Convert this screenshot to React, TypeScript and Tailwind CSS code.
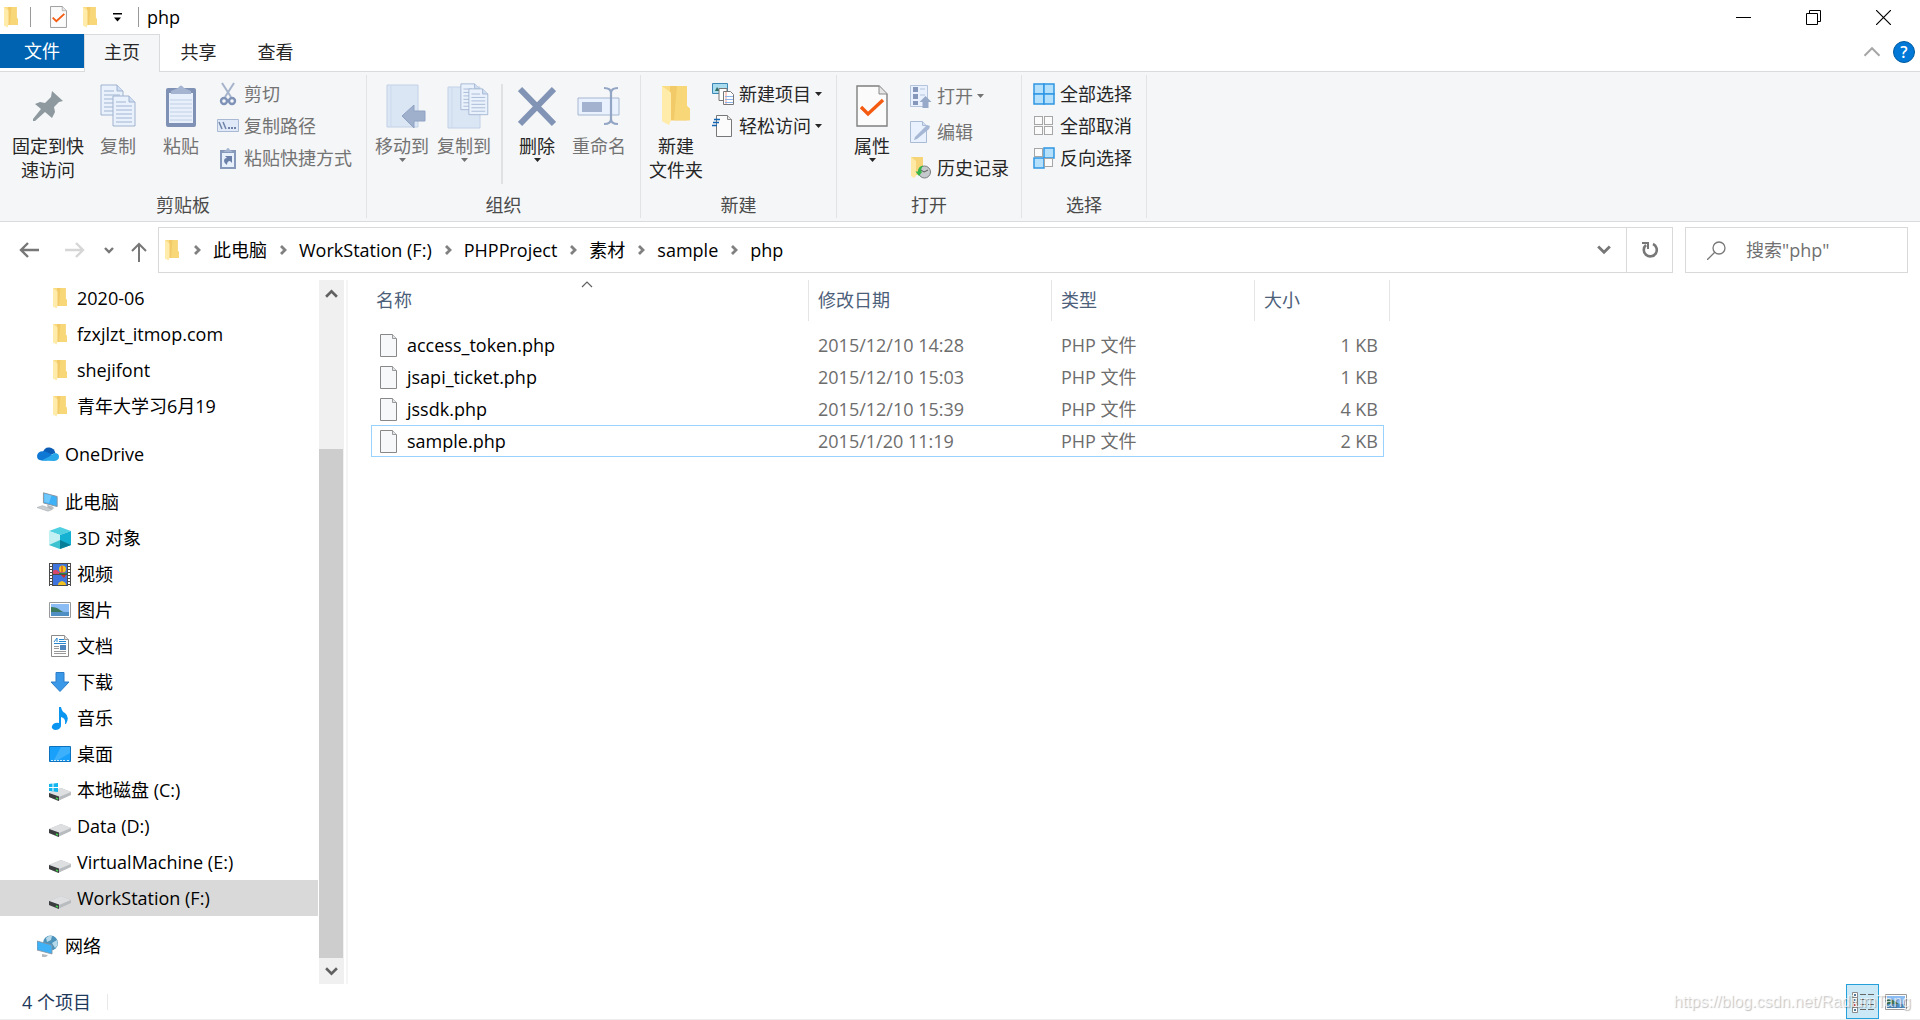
import { useState } from "react";
import type { ReactNode } from "react";

const Folder = ({ className = "h-[21px] w-[14px]" }: { className?: string }) => (
  <svg className={className} viewBox="0 0 28 42" preserveAspectRatio="none">
    <path d="M0 0h25v21l3 3v12H0z" fill="#fbdc82" />
    <path d="M8 0h17v36H8z" fill="#f2cb68" />
    <path d="M15 0h10v21l3 3v12H12z" fill="#f8d779" />
    <path d="M0 0l9 7v29l-2 5L0 37z" fill="#ffebaa" />
  </svg>
);

const CheckDoc = ({ className = "h-[22px] w-[17px]" }: { className?: string }) => (
  <svg className={className} viewBox="0 0 32 42" preserveAspectRatio="none">
    <path d="M1 1h22l8 8v32H1z" fill="#fbfbfb" stroke="#7f7f7f" strokeWidth="1.4" />
    <path d="M23 1v8h8" fill="#e6e6e6" stroke="#8a8a8a" />
    <path d="M5 22l7 7 15-14" fill="none" stroke="#f45b10" strokeWidth="3.4" />
  </svg>
);

const Pin = () => (
  <svg width="32" height="32" viewBox="0 0 32 32">
    <path d="M20 1l11 10-4 1-5 5 1 5-3 6-7-6L3 31l-2 0 0-2 8-10-6-5 5-2 5 1 6-6z" fill="#8d999f" />
  </svg>
);

const Sheet = ({ x, y }: { x: number; y: number }) => (
  <g transform={`translate(${x} ${y})`}>
    <path d="M1 1h16l6 6v24H1z" fill="#e9f1fc" stroke="#9fb2cf" />
    <path d="M17 1v6h6" fill="#cfddf1" stroke="#9fb2cf" />
    <path d="M4 7h10M4 11h16M4 15h16M4 19h16M4 23h16M4 27h16" stroke="#a3b5d1" />
  </g>
);

const Copy = () => (
  <svg width="38" height="44" viewBox="0 0 38 44">
    <Sheet x={1} y={0} />
    <Sheet x={13} y={11} />
  </svg>
);

const Paste = () => (
  <svg width="32" height="44" viewBox="0 0 32 44">
    <rect x="1" y="4" width="30" height="39" rx="2" fill="#7f91b5" />
    <path d="M4 9h24v30H4z" fill="#e8f0fb" />
    <path d="M5 16h22M5 20h22M5 24h22M5 28h22M5 32h22M5 36h22" stroke="#c0cee5" />
    <path d="M6 10V7l7-3q3-5 6 0l7 3v3z" fill="#a5b4d0" />
  </svg>
);

const Scissors = () => (
  <svg width="18" height="24" viewBox="0 0 18 24" fill="none">
    <path d="M3 1l9 14M15 1L6 15" stroke="#a5b3cb" strokeWidth="2" />
    <circle cx="5" cy="19" r="3" stroke="#7f93b8" strokeWidth="2.4" />
    <circle cx="13" cy="19" r="3" stroke="#7f93b8" strokeWidth="2.4" />
  </svg>
);

const CopyPath = () => (
  <svg width="22" height="14" viewBox="0 0 22 14">
    <path d="M.5.5h21v12H.5z" fill="#dfe9f7" stroke="#a9b9d4" />
    <path d="M2 3l3 7M6 3l3 7" stroke="#6f83a8" strokeWidth="1.5" />
    <path d="M11 9h2M14 9h2M17 9h2" stroke="#6f83a8" strokeWidth="2" />
  </svg>
);

const PasteLink = () => (
  <svg width="18" height="23" viewBox="0 0 18 23">
    <path d="M1 3h16v19H1z" fill="#8799bb" />
    <path d="M3 6h12v14H3z" fill="#e8f0fb" />
    <path d="M4 5l3-2q2-4 4 0l3 2z" fill="#a5b4d0" />
    <path d="M6 9h7v7l-2-2q-3 0-3 4-3-2-3-4 0-3 3-3z" fill="#6b80a8" />
  </svg>
);

const MoveTo = () => (
  <svg width="48" height="44" viewBox="-8 0 48 44">
    <path d="M1 1h31v42H1z" fill="#dbe6f5" stroke="#c2d1e6" />
    <path d="M5 1v42" stroke="#cbd9ec" />
    <path d="M16 32l12-11v6h11v10H28v7z" fill="#9fb0cd" stroke="#8fa2c2" />
  </svg>
);

const CopyTo = () => (
  <svg width="50" height="46" viewBox="-8 0 50 46">
    <path d="M1 4h32v41H1z" fill="#dbe6f5" stroke="#c2d1e6" />
    <path d="M5 4v41" stroke="#cbd9ec" />
    <g transform="translate(13 0) scale(.86)"><Sheet x={0} y={0} /></g>
    <g transform="translate(21 5) scale(.86)"><Sheet x={0} y={0} /></g>
  </svg>
);

const Delete = () => (
  <svg width="38" height="44" viewBox="0 0 38 44">
    <path d="M2 5l34 35M36 5L2 40" stroke="#8294b5" strokeWidth="6" />
  </svg>
);

const Rename = () => (
  <svg width="44" height="44" viewBox="0 0 44 44" fill="none">
    <path d="M1 14h41v17H1z" fill="#e8f1fd" stroke="#a6b7d2" />
    <path d="M5 18h20v10H5z" fill="#a3b3cf" />
    <path d="M27 4q7 0 7 5v26q0 5-7 5M41 4q-7 0-7 5v26q0 5 7 5" stroke="#93a5c4" strokeWidth="2.2" />
  </svg>
);

const NewItem = () => (
  <svg width="22" height="22" viewBox="0 0 22 22">
    <path d="M.5.5h15v10H.5z" fill="#a9dcee" stroke="#3d87b5" />
    <path d="M3 8l2-4 3 4z" fill="#2f6f6a" />
    <path d="M7 5.500h8v12H7z" fill="#fff" stroke="#777" />
    <path d="M11.500 8.500h7l3 3v10h-10z" fill="#fff" stroke="#777" />
    <path d="M14 9v12" stroke="#f09a8c" />
    <path d="M13 13.500h8M13 16.500h8M13 19.500h8" stroke="#8cb4ea" />
  </svg>
);

const EasyAccess = () => (
  <svg width="22" height="22" viewBox="0 0 22 22">
    <path d="M4.500.5h11l4 4v17h-15z" fill="#fbfbfb" stroke="#777" />
    <path d="M15.500.5v4h4" fill="#e6e6e6" stroke="#888" />
    <path d="M2 4.500h6M1 7.500h6M0 10.500h5" stroke="#1565b5" strokeWidth="1.500" />
  </svg>
);

const OpenIcon = () => (
  <svg width="22" height="23" viewBox="0 0 22 23">
    <path d="M.5.5h17v21H.5z" fill="#e8f1fd" stroke="#b4c4dc" />
    <path d="M3 2h5v5H3zM3 9h5v5H3zM3 16h5v4H3z" fill="#8598bb" />
    <path d="M10 4h5M10 10h5" stroke="#b4c4dc" />
    <path d="M15.500 11l6 6h-3v6h-6v-6h-3z" fill="#97a9c8" />
  </svg>
);

const Edit = () => (
  <svg width="22" height="23" viewBox="0 0 22 23">
    <path d="M.5.5h12l4 4v17H.5z" fill="#e8f1fd" stroke="#a9bad5" />
    <path d="M12.500.5v4h4" fill="#d3dff1" stroke="#a9bad5" />
    <path d="M4 19l1-3L17 4l3 1-1 3L7 18z" fill="#a5b7d4" />
  </svg>
);

const History = () => (
  <svg width="22" height="22" viewBox="0 0 22 22">
    <path d="M1 0h12v18H1z" fill="#f6d477" />
    <path d="M1 0l5 4v15l-2 2-3-2z" fill="#ffe9a4" />
    <circle cx="14.500" cy="15" r="6" fill="#c6c9cb" stroke="#777b7e" />
    <path d="M11 13l3 2 4-2" fill="none" stroke="#555" />
    <path d="M13 8.500q-5 1-5 6H5.500L9 19l3.500-4.500H11q0-3 2-6z" fill="#35b44a" />
  </svg>
);

const Cell = ({ x, y, on }: { x: number; y: number; on: boolean }) => (
  <rect
    x={on ? x : x + 0.5}
    y={on ? y : y + 0.5}
    width={on ? 10 : 8}
    height={on ? 10 : 8}
    fill={on ? "#b5e0fc" : "#fbfbfb"}
    stroke={on ? "#2f96e3" : "#a6a6a6"}
    strokeWidth={on ? 1.5 : 1}
  />
);

const Grid = ({ on }: { on: boolean[] }) => (
  <svg width="22" height="22" viewBox="0 0 22 22">
    <Cell x={1} y={1} on={on[0]} />
    <Cell x={11} y={1} on={on[1]} />
    <Cell x={1} y={11} on={on[2]} />
    <Cell x={11} y={11} on={on[3]} />
  </svg>
);

const OneDrive = () => (
  <svg width="24" height="16" viewBox="0 0 24 16">
    <path d="M6 7q2-7 8-6 5 1 6 6l-8 3z" fill="#0a5cb5" />
    <path d="M5 15q-5 0-5-5 1-5 6-5l3 0 8 4-6 6z" fill="#0f78d4" />
    <path d="M5 15l8-4 6-4q5 0 5 4 0 4-5 4.500z" fill="#28a8ea" />
  </svg>
);

const Computer = () => (
  <svg width="24" height="22" viewBox="0 0 24 22">
    <path d="M7 1l15 4v11L7 12z" fill="#3eb1f7" stroke="#8a9299" />
    <path d="M8 2l8 2-3 8-5-1z" fill="#6fc8fb" />
    <path d="M11 14l6 2 2 2-7 1z" fill="#b6bbbf" />
    <path d="M0 17l6-2 11 4-5 2z" fill="#c9ced2" stroke="#a2a7ab" strokeWidth=".6" />
  </svg>
);

const Cube = () => (
  <svg width="22" height="22" viewBox="0 0 22 22">
    <path d="M0 4l11-4 11 4-11 4z" fill="#4fd0e0" />
    <path d="M0 4l11 4v14L0 18z" fill="#c3f0f2" />
    <path d="M22 4L11 8v14l11-4z" fill="#14b1d3" />
    <path d="M0 18l11-5v9z" fill="#3dc3cf" />
    <path d="M22 18l-11-5v9z" fill="#087f98" />
  </svg>
);

const Video = () => (
  <svg width="22" height="23" viewBox="0 0 22 23">
    <path d="M0 0h22v23H0z" fill="#4a4a4a" />
    <path d="M4 1h14v10H4zM4 12h14v10H4z" fill="#3f74dc" />
    <path d="M2 1v22M20 1v22" stroke="#fff" strokeWidth="2" strokeDasharray="2 1" />
    <circle cx="13.500" cy="6" r="3.500" fill="#f2c320" />
    <path d="M4 8q3-3 6 1l8 1v1H4z" fill="#d8486b" />
    <path d="M10 10h8v1h-8z" fill="#2d8a3c" />
    <path d="M12 12h5l-2 3z" fill="#d22d1c" />
    <path d="M9 22q0-3 4-4 4 1 4 4z" fill="#f2c320" />
    <path d="M13 3v6" stroke="#d22d1c" />
  </svg>
);

const Picture = () => (
  <svg width="22" height="16" viewBox="0 0 22 16">
    <path d="M.5.500h21v15H.5z" fill="#fff" stroke="#9a9a9a" />
    <path d="M2 2h18v12H2z" fill="#8bbcf4" />
    <path d="M2 5q6 0 9 3t9 2v1H2z" fill="#3b7a5f" />
    <path d="M2 10h18v4H2z" fill="#4f8fc4" />
  </svg>
);

const Docs = () => (
  <svg width="18" height="22" viewBox="0 0 18 22">
    <path d="M.5.500h13l4 4v17H.5z" fill="#fff" stroke="#8a8a8a" />
    <path d="M13.500.500v4h4" fill="#e5e5e5" stroke="#999" />
    <path d="M3 7l3-4v4M8 4.500h5M8 6.500h7M3 8.500h12" stroke="#2a86cf" fill="none" />
    <path d="M3 11.500h5M3 13.500h5M3 16.500h12M3 18.500h12" stroke="#999" />
    <path d="M9 10h6v5H9z" fill="#4f86bd" />
  </svg>
);

const Download = () => (
  <svg width="20" height="20" viewBox="0 0 20 20">
    <path d="M6 .5h8V10h5l-9 9.500L1 10h5z" fill="#3a98e8" stroke="#2b7dc8" />
  </svg>
);

const Music = () => (
  <svg width="18" height="23" viewBox="0 0 18 23">
    <path d="M8 0h2q1 5 4 6 5 4 1 11h-1q1-6-4-7v9q-1 4-6 4-4-1-3-4 2-4 7-3z" fill="#0a96f0" />
  </svg>
);

const Desktop = () => (
  <svg width="22" height="16" viewBox="0 0 22 16">
    <path d="M.5.500h21v15H.5z" fill="#18a0fb" stroke="#0d72bd" />
    <path d="M12 1h9v6L9 14H5z" fill="#3db0fc" />
    <path d="M2 14.500h14M18 14.500h2" stroke="#cbe9ff" strokeDasharray="2 1" />
  </svg>
);

const Drive = ({ system }: { system?: boolean }) => (
  <svg width="22" height="24" viewBox="0 0 22 24">
    <path d="M0 15l12-5 10 4v3L9 23l-9-4z" fill="#b9bcbf" />
    <path d="M0 15l12-5 10 4-12 5z" fill="#dddfe1" />
    <path d="M0 15l10 3.500V23L0 19z" fill="#3b3d3f" />
    <path d="M7 20l2 1" stroke="#3ed04a" strokeWidth="1.500" />
    {system && <path d="M0 6l3.500-.5V9H0zM4.500 5.500L9 5v4H4.500zM0 10h3.500v3.500L0 13zM4.500 10H9v4l-4.500-.5z" fill="#12b5ee" />}
  </svg>
);

const Network = () => (
  <svg width="22" height="22" viewBox="0 0 22 22">
    <circle cx="13.500" cy="8" r="7.500" fill="#4c93bb" />
    <path d="M9 3q3-3 6-2l-1 4-4 2zM15 8l5-3q2 5-2 8z" fill="#b5d9e8" />
    <path d="M0 6l15 4v9L0 15z" fill="#3eb1f7" stroke="#8a9299" strokeWidth=".8" />
    <path d="M5 19l6 1-2 2H5z" fill="#b6bbbf" />
  </svg>
);

const FileIcon = () => (
  <svg width="17" height="23" viewBox="0 0 17 23" className="shrink-0">
    <path d="M.5.500h12l4 4v18H.5z" fill="#f7f8f9" stroke="#888" />
    <path d="M12.500.500v4h4" fill="#e4e6e8" stroke="#999" />
  </svg>
);

const Chevron = ({ d, size = 12, color = "#606060", width = 2.4 }: { d: string; size?: number; color?: string; width?: number }) => (
  <svg width={size} height={size} viewBox="0 0 12 12" fill="none" stroke={color} strokeWidth={width}>
    <path d={d} />
  </svg>
);

const Caret = () => (
  <svg width="7" height="4" viewBox="0 0 7 4" fill="currentColor">
    <path d="M0 0h7L3.500 4z" />
  </svg>
);

type ButtonProps = { icon: ReactNode; label: ReactNode; caret?: boolean; off?: boolean; className?: string };

const BigButton = ({ icon, label, caret, off, className = "w-[62px]" }: ButtonProps) => (
  <button type="button" className={`flex flex-col items-center ${className} ${off ? "text-[#737373]" : "text-[#262626]"}`}>
    <span className="mb-[6px] flex h-11 items-center justify-center">{icon}</span>
    <span className="whitespace-nowrap leading-6">{label}</span>
    {caret && <Caret />}
  </button>
);

const SmallButton = ({ icon, label, caret, off }: ButtonProps) => (
  <button type="button" className={`flex h-6 items-center gap-1 whitespace-nowrap ${off ? "text-[#737373]" : "text-[#262626]"}`}>
    <span className="flex w-6 justify-center">{icon}</span>
    {label}
    {caret && <Caret />}
  </button>
);

const Group = ({ title, className, children }: { title: string; className: string; children: ReactNode }) => (
  <section className="my-[3px] flex flex-col justify-between border-r border-[#e2e3e4]">
    <div className={`flex pt-[7px] ${className}`}>{children}</div>
    <h2 className="pb-px text-center leading-6 text-[#4a4a4a]">{title}</h2>
  </section>
);

const tree = [
  { name: "2020-06", icon: <Folder /> },
  { name: "fzxjlzt_itmop.com", icon: <Folder /> },
  { name: "shejifont", icon: <Folder /> },
  { name: "青年大学习6月19", icon: <Folder /> },
  { name: "OneDrive", icon: <OneDrive />, root: true },
  { name: "此电脑", icon: <Computer />, root: true },
  { name: "3D 对象", icon: <Cube /> },
  { name: "视频", icon: <Video /> },
  { name: "图片", icon: <Picture /> },
  { name: "文档", icon: <Docs /> },
  { name: "下载", icon: <Download /> },
  { name: "音乐", icon: <Music /> },
  { name: "桌面", icon: <Desktop /> },
  { name: "本地磁盘 (C:)", icon: <Drive system /> },
  { name: "Data (D:)", icon: <Drive /> },
  { name: "VirtualMachine (E:)", icon: <Drive /> },
  { name: "WorkStation (F:)", icon: <Drive /> },
  { name: "网络", icon: <Network />, root: true },
];

const files = [
  { name: "access_token.php", date: "2015/12/10 14:28", size: "1 KB" },
  { name: "jsapi_ticket.php", date: "2015/12/10 15:03", size: "1 KB" },
  { name: "jssdk.php", date: "2015/12/10 15:39", size: "4 KB" },
  { name: "sample.php", date: "2015/1/20 11:19", size: "2 KB" },
];

const path = ["此电脑", "WorkStation (F:)", "PHPProject", "素材", "sample", "php"];

const App = () => {
  const [place, setPlace] = useState("WorkStation (F:)");
  const [focused, setFocused] = useState("sample.php");
  const [query, setQuery] = useState("");

  return (
    <div className="relative flex min-h-screen flex-col bg-white font-['Open_Sans','Noto_Sans_CJK_SC',sans-serif] text-lg text-black">
      {/* Title bar */}
      <header className="flex h-[34px] items-center pr-[2px]">
        <span className="pl-1"><Folder /></span>
        <span className="ml-3 h-5 w-px bg-[#999]" />
        <button type="button" aria-label="属性" className="ml-[19px]"><CheckDoc /></button>
        <button type="button" aria-label="新建文件夹" className="ml-4"><Folder /></button>
        <button type="button" aria-label="自定义快速访问工具栏" className="ml-4">
          <svg width="9" height="9" viewBox="0 0 9 9"><path d="M0 0h9v1.500H0zM1 4.500h7L4.500 8.500z" /></svg>
        </button>
        <span className="ml-4 h-5 w-px bg-[#999]" />
        <h1 className="ml-2 flex-1">php</h1>
        <button type="button" aria-label="最小化" className="flex h-7 w-[70px] items-center justify-center">
          <svg width="15" height="15" stroke="#000"><path d="M0 7.500h15" /></svg>
        </button>
        <button type="button" aria-label="还原" className="flex h-7 w-[70px] items-center justify-center">
          <svg width="15" height="15" fill="none" stroke="#000"><path d="M.5 3.500h11v11H.5zM3.500 3.500v-3h11v11h-3" /></svg>
        </button>
        <button type="button" aria-label="关闭" className="flex h-7 w-[70px] items-center justify-center">
          <svg width="15" height="15" stroke="#000" strokeWidth="1.200"><path d="M0 0l15 15M15 0L0 15" /></svg>
        </button>
      </header>

      {/* Tabs */}
      <nav className="flex h-[38px] border-b border-[#dadbdc] text-[#262626]">
        <button type="button" className="h-[34px] w-[84px] bg-[#0063b1] text-white">文件</button>
        <button type="button" className="-mb-px w-[76px] border border-b-0 border-[#dadbdc] bg-[#f5f6f7] pb-[3px]">主页</button>
        <button type="button" className="w-[77px] pb-[2px]">共享</button>
        <button type="button" className="w-[77px] pb-[2px]">查看</button>
        <button type="button" aria-label="最小化功能区" className="ml-auto px-3 pb-[2px]">
          <Chevron d="M1 8.500L6 3.500l5 5" size={18} color="#a6a6a6" width={1.3} />
        </button>
        <button type="button" aria-label="帮助" className="mt-[7px] mr-[5px] h-[22px] w-[22px] rounded-full border border-[#005a9e] bg-[#0078d7] text-base leading-5 font-semibold text-white">?</button>
      </nav>

      {/* Ribbon */}
      <div className="flex min-h-[150px] border-b border-[#dadbdc] bg-[#f5f6f7]">
        <Group title="剪贴板" className="pr-[14px] pl-[10px]">
          <div className="flex pt-[2px]">
            <BigButton className="w-[76px]" icon={<Pin />} label={<>固定到快<br />速访问</>} />
            <BigButton className="w-16" icon={<Copy />} label="复制" off />
            <BigButton className="w-[62px]" icon={<Paste />} label="粘贴" off />
          </div>
          <div className="flex flex-col gap-2 pl-1">
            <SmallButton icon={<Scissors />} label="剪切" off />
            <SmallButton icon={<CopyPath />} label="复制路径" off />
            <SmallButton icon={<PasteLink />} label="粘贴快捷方式" off />
          </div>
        </Group>
        <Group title="组织" className="pr-[10px] pl-1">
          <div className="flex pt-[2px]">
            <BigButton icon={<MoveTo />} label="移动到" caret off />
            <BigButton icon={<CopyTo />} label="复制到" caret off />
            <span className="mr-[3px] ml-[6px] h-[100px] w-[2px] bg-[#e0e1e2]" />
            <BigButton icon={<Delete />} label="删除" caret />
            <BigButton icon={<Rename />} label="重命名" off />
          </div>
        </Group>
        <Group title="新建" className="pr-[14px] pl-1">
          <div className="flex pt-[2px]">
            <BigButton icon={<Folder className="h-10 w-7" />} label={<>新建<br />文件夹</>} />
          </div>
          <div className="flex flex-col gap-2 pl-1">
            <SmallButton icon={<NewItem />} label="新建项目" caret />
            <SmallButton icon={<EasyAccess />} label="轻松访问" caret />
          </div>
        </Group>
        <Group title="打开" className="pr-3 pl-1">
          <div className="flex pt-[2px]">
            <BigButton icon={<CheckDoc className="h-[42px] w-8" />} label="属性" caret />
          </div>
          <div className="flex flex-col gap-3 pt-[2px] pl-[6px]">
            <SmallButton icon={<OpenIcon />} label="打开" caret off />
            <SmallButton icon={<Edit />} label="编辑" off />
            <SmallButton icon={<History />} label="历史记录" />
          </div>
        </Group>
        <Group title="选择" className="pr-[14px] pl-[10px]">
          <div className="flex flex-col gap-2">
            <SmallButton icon={<Grid on={[true, true, true, true]} />} label="全部选择" />
            <SmallButton icon={<Grid on={[false, false, false, false]} />} label="全部取消" />
            <SmallButton icon={<Grid on={[false, true, true, false]} />} label="反向选择" />
          </div>
        </Group>
      </div>

      {/* Address bar */}
      <div className="flex h-[58px] items-start pt-[5px] pr-3 pl-[6px]">
        <button type="button" aria-label="后退" className="flex h-[46px] w-[46px] items-center justify-center">
          <svg width="20" height="16" viewBox="0 0 20 16" fill="none" stroke="#777" strokeWidth="2.400"><path d="M20 8H2M9 1L2 8l7 7" /></svg>
        </button>
        <button type="button" aria-label="前进" className="flex h-[46px] w-[46px] items-center justify-center">
          <svg width="20" height="16" viewBox="0 0 20 16" fill="none" stroke="#d6d6d6" strokeWidth="2.400"><path d="M0 8h18M11 1l7 7-7 7" /></svg>
        </button>
        <button type="button" aria-label="最近浏览的位置" className="flex h-[46px] w-[22px] items-center justify-center">
          <Chevron d="M2 4l4 4 4-4" color="#777" />
        </button>
        <button type="button" aria-label="上移" className="flex h-[46px] w-[38px] items-center justify-center pt-1">
          <svg width="16" height="20" viewBox="0 0 16 20" fill="none" stroke="#777" strokeWidth="2"><path d="M8 20V2M1 9l7-7 7 7" /></svg>
        </button>
        <div className="flex h-[46px] flex-1 items-center border border-[#d9d9d9] pl-[6px]">
          <Folder className="mr-[2px] h-[21px] w-[14px]" />
          {path.map((item) => (
            <span key={item} className="flex items-center">
              <span className="mx-[10px]"><Chevron d="M4 2l4 4-4 4" color="#808080" width={2.8} /></span>
              <a href="#" className="whitespace-nowrap">{item}</a>
            </span>
          ))}
          <button type="button" aria-label="以前的位置" className="ml-auto flex h-full w-11 items-center justify-center">
            <Chevron d="M1 3l5 5 5-5" size={14} color="#777" />
          </button>
          <button type="button" aria-label="刷新" className="flex h-full w-[46px] items-center justify-center border-l border-[#d9d9d9]">
            <svg width="18" height="18" viewBox="0 0 18 18" fill="none" stroke="#777" strokeWidth="2.600">
              <path d="M12 3a6.500 6.500 0 1 1-7 1" />
              <path d="M1 2h6v6" strokeWidth="2" />
            </svg>
          </button>
        </div>
        <label className="ml-3 flex h-[46px] w-[223px] items-center border border-[#d9d9d9] pl-[21px]">
          <svg width="19" height="19" viewBox="0 0 19 19" fill="none" stroke="#777" strokeWidth="1.300" className="shrink-0">
            <circle cx="12" cy="7" r="6" />
            <path d="M8 11L0 19" />
          </svg>
          <input
            aria-label="搜索"
            value={query}
            onChange={(e) => setQuery(e.target.value)}
            placeholder={'搜索"php"'}
            className="ml-5 w-full min-w-0 outline-none placeholder:text-[#707070]"
          />
        </label>
      </div>

      <main className="flex flex-1">
        {/* Navigation pane */}
        <aside className="w-[319px] shrink-0">
          <ul>
            {tree.map((item) => (
              <li key={item.name} className={item.root ? "mt-3" : ""}>
                <button
                  type="button"
                  onClick={() => setPlace(item.name)}
                  className={`flex h-9 w-[318px] items-center gap-[6px] whitespace-nowrap ${item.root ? "pl-[37px]" : "pl-[49px]"} ${
                    place === item.name ? "bg-[#d9d9d9]" : ""
                  }`}>
                  <span className="flex w-[22px] justify-center">{item.icon}</span>
                  {item.name}
                </button>
              </li>
            ))}
          </ul>
        </aside>
        <div className="flex w-[25px] shrink-0 flex-col bg-[#f0f0f0]">
          <button type="button" aria-label="向上滚动" className="flex h-[26px] items-center justify-center">
            <Chevron d="M1 9l5-5 5 5" size={13} />
          </button>
          <div className="flex-[143]" />
          <div className="mr-px flex-[509] bg-[#cdcdcd]" />
          <button type="button" aria-label="向下滚动" className="flex h-[26px] items-center justify-center">
            <Chevron d="M1 3l5 5 5-5" size={13} />
          </button>
        </div>
        <div className="ml-[2px] w-[2px] shrink-0 bg-[#f5f5f5]" />

        {/* File list */}
        <div className="flex-1 pl-[23px]">
          <table className="w-[1019px] table-fixed border-separate border-spacing-0">
            <colgroup>
              <col className="w-[438px]" />
              <col className="w-[243px]" />
              <col className="w-[203px]" />
              <col className="w-[129px]" />
              <col className="w-[6px]" />
            </colgroup>
            <thead>
              <tr className="h-[49px] text-left align-top text-[#4c607a]">
                <th className="relative p-0 font-normal">
                  <span className="absolute -top-px left-[210px]"><Chevron d="M1 8l5-5 5 5" width={1.2} /></span>
                  <div className="border-r border-[#e5e5e5] pl-[5px] leading-[41px]">名称</div>
                </th>
                <th className="p-0 font-normal">
                  <div className="border-r border-[#e5e5e5] pl-[9px] leading-[41px]">修改日期</div>
                </th>
                <th className="p-0 font-normal">
                  <div className="border-r border-[#e5e5e5] pl-[9px] leading-[41px]">类型</div>
                </th>
                <th colSpan={2} className="p-0 font-normal">
                  <div className="border-r border-[#e5e5e5] pl-[9px] leading-[41px]">大小</div>
                </th>
              </tr>
            </thead>
            <tbody>
              {files.map((file) => {
                const line = focused === file.name ? "border-[#99d1ff]" : "border-transparent";
                return (
                  <tr key={file.name} onClick={() => setFocused(file.name)} className="h-8 text-[#6d6d6d]">
                    <td className={`border-y border-l p-0 text-black ${line}`}>
                      <div className="flex items-center gap-[10px] pl-2">
                        <FileIcon />
                        {file.name}
                      </div>
                    </td>
                    <td className={`border-y p-0 pl-[9px] ${line}`}>{file.date}</td>
                    <td className={`border-y p-0 pl-[9px] ${line}`}>PHP 文件</td>
                    <td className={`border-y border-r p-0 pr-[5px] text-right ${line}`}>{file.size}</td>
                  </tr>
                );
              })}
            </tbody>
          </table>
        </div>
      </main>

      {/* Status bar */}
      <footer className="flex h-9 items-center border-b border-[#ececec] pl-[22px] text-[#1e395b]">
        <span>4 个项目</span>
        <span className="ml-4 h-4 w-px bg-[#e8e8e8]" />
        <button type="button" aria-label="详细信息" className="ml-auto flex h-[35px] w-[33px] items-center justify-center border border-[#26a0da] bg-[#cbe8f6]">
          <svg width="22" height="22" viewBox="0 0 22 22" fill="#fff" stroke="#8c8c8c">
            <path d="M.5 1.500h5v5h-5zM.5 6.500h5v5h-5zM.5 11.500h5v5h-5zM.5 16.500h5v5h-5z" />
            <path d="M8 3.500h6M16 3.500h6M8 8.500h6M16 8.500h6M8 13.500h6M16 13.500h6M8 18.500h6M16 18.500h6" stroke="#666" />
            <path d="M2 4h2M2 9h2M2 19h2" stroke="#527a9c" strokeWidth="2" />
            <path d="M2 14h2" stroke="#c8402c" strokeWidth="2" />
          </svg>
        </button>
        <button type="button" aria-label="大缩略图" className="flex w-[41px] items-center pl-[6px]"><Picture /></button>
      </footer>
      <span className="pointer-events-none absolute right-[9px] bottom-[6px] font-['Liberation_Sans',sans-serif] text-base text-white/70 [text-shadow:1px_1px_1px_#00000040]">
        https://blog.csdn.net/RadiumTang
      </span>
    </div>
  );
};

export default App;
